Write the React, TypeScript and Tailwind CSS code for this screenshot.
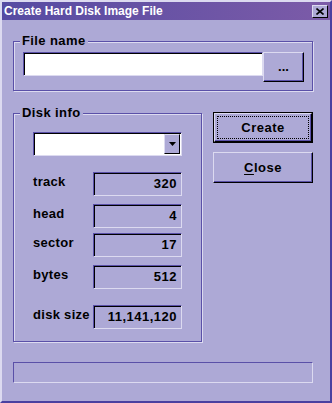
import React from "react";

const BG = "bg-[#ada9d6]";

function Group({ label, className, children }: { label: string; className: string; children: React.ReactNode }) {
  return (
    <div className={`relative border border-[#5a50a8] shadow-[inset_1px_1px_0_#dcdaf0,1px_1px_0_#dcdaf0] ${className}`}>
      <div className={`absolute left-[6px] top-[-9px] px-[2px] ${BG} text-[13px] font-bold leading-[16px] text-black tracking-[0.4px]`}>
        {label}
      </div>
      {children}
    </div>
  );
}

function Sunken({ className, children, white }: { className: string; children?: React.ReactNode; white?: boolean }) {
  return (
    <div
      className={`border-t border-l border-[#5a50a8] border-b border-r border-b-[#dcdaf0] border-r-[#dcdaf0] shadow-[inset_1px_1px_0_#000] ${white ? "bg-white" : ""} ${className}`}
    >
      {children}
    </div>
  );
}

function ValueRow({ label, value, mt }: { label: string; value: string; mt: string }) {
  return (
    <div className={`flex items-start ${mt}`}>
      <div className="w-[60px] pt-[2px] text-[13px] font-bold leading-[16px] tracking-[0.3px]">{label}</div>
      <Sunken className="w-[89px] h-[24px] flex items-center justify-end pr-[4px] text-[13px] font-bold tracking-[0.5px]">
        {value}
      </Sunken>
    </div>
  );
}

export default function App() {
  return (
    <div
      className={`w-[332px] h-[403px] ${BG} border-l-2 border-t-2 border-[#dcdaf0] border-r-2 border-b-2 border-r-[#4a40a0] border-b-[#4a40a0] flex flex-col text-black`}
      style={{ fontFamily: '"Liberation Sans", Arial, sans-serif' }}
    >
      {/* Title bar */}
      <div className="h-[18px] flex items-center justify-between bg-gradient-to-r from-[#564ba2] to-[#7c5ba8] pl-[2px] pr-[2px]">
        <span className="text-white text-[12px] font-bold leading-none">Create Hard Disk Image File</span>
        <div className="w-[16px] h-[13px] bg-[#ada9d6] border border-t-[#dcdaf0] border-l-[#dcdaf0] border-b-black border-r-black flex items-center justify-center">
          <svg width="8" height="7" viewBox="0 0 8 7">
            <path d="M0.5 0.5 L7.5 6.5 M7.5 0.5 L0.5 6.5" stroke="#000" strokeWidth="1.6" />
          </svg>
        </div>
      </div>

      <div className="flex-1 flex flex-col pl-[11px] pr-[16px]">
        {/* File name group */}
        <Group label="File name" className="mt-[21px] w-[300px] h-[50px]">
          <div className="flex items-start pl-[9px] pt-[10px]">
            <Sunken white className="w-[240px] h-[24px]" />
            <button className="w-[41px] h-[30px] bg-[#ada9d6] border border-t-[#dcdaf0] border-l-[#dcdaf0] border-b-black border-r-black shadow-[inset_-1px_-1px_0_#5a50a8] flex items-center justify-center text-[13px] font-bold leading-none pb-[2px]">
              ...
            </button>
          </div>
        </Group>

        <div className="flex mt-[22px]">
          {/* Disk info group */}
          <Group label="Disk info" className="w-[189px] h-[229px]">
            <div className="flex flex-col pl-[19px] pt-[18px]">
              <Sunken white className="w-[149px] h-[24px] flex justify-end pr-[1px] pt-[1px]">
                <div className="w-[16px] h-[20px] bg-[#ada9d6] border border-t-[#dcdaf0] border-l-[#dcdaf0] border-b-black border-r-black flex items-center justify-center">
                  <svg width="7" height="4" viewBox="0 0 7 4">
                    <path d="M0 0 H7 L3.5 4 Z" fill="#000" />
                  </svg>
                </div>
              </Sunken>
              <ValueRow label="track" value="320" mt="mt-[16px]" />
              <ValueRow label="head" value="4" mt="mt-[8px]" />
              <ValueRow label="sector" value="17" mt="mt-[5px]" />
              <ValueRow label="bytes" value="512" mt="mt-[8px]" />
              <ValueRow label="disk size" value="11,141,120" mt="mt-[16px]" />
            </div>
          </Group>

          {/* Buttons */}
          <div className="flex flex-col ml-[11px] mt-[-1px]">
            <button className="w-[100px] h-[31px] border border-black p-0 bg-[#ada9d6]">
              <div className="w-full h-full border border-t-[#dcdaf0] border-l-[#dcdaf0] border-b-black border-r-black shadow-[inset_-1px_-1px_0_#5a50a8] p-[2px]">
                <div className="w-full h-full border border-dotted border-black flex items-center justify-center text-[13px] font-bold tracking-[0.5px]">
                  Create
                </div>
              </div>
            </button>
            <button className="mt-[9px] w-[100px] h-[31px] bg-[#ada9d6] border border-t-[#dcdaf0] border-l-[#dcdaf0] border-b-black border-r-black shadow-[inset_-1px_-1px_0_#5a50a8] flex items-center justify-center text-[13px] font-bold tracking-[0.5px]">
              <span>
                <span className="underline underline-offset-2">C</span>lose
              </span>
            </button>
          </div>
        </div>

        {/* Status box */}
        <div className="mt-[20px] w-[300px] h-[21px] border border-[#5a50a8] border-b-[#dcdaf0] border-r-[#dcdaf0]" />
      </div>
    </div>
  );
}
